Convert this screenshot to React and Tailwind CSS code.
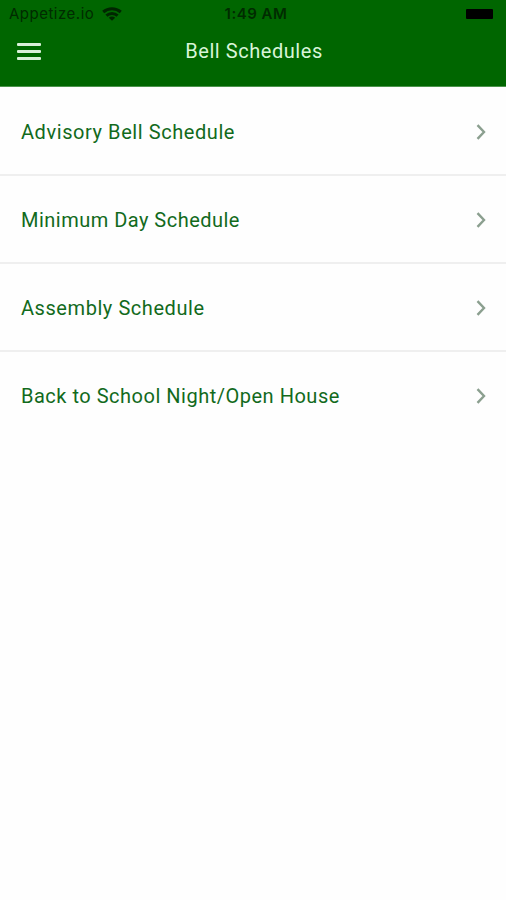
const SCHEDULES = [
  { id: 1, title: 'Advisory Bell Schedule', spacing: 'tracking-[0.57px]' },
  { id: 2, title: 'Minimum Day Schedule', spacing: 'tracking-[0.48px]' },
  { id: 3, title: 'Assembly Schedule', spacing: 'tracking-[0.56px]' },
  { id: 4, title: 'Back to School Night/Open House', spacing: 'tracking-[0.51px]' },
];

function WifiIcon() {
  return (
    <svg width="20" height="14" viewBox="0 0 20 14" fill="none" stroke="#002600" strokeWidth="3">
      <path d="M1.2 5C6.2 0.6 13.8 0.6 18.8 5" />
      <path d="M4.4 8.7C7.6 5.8 12.4 5.8 15.6 8.7" />
      <path d="M10 13.8L6.8 10.8C8.7 9.2 11.3 9.2 13.2 10.8Z" fill="#002600" stroke="none" />
    </svg>
  );
}

function StatusBar() {
  return (
    <div className="grid h-7 grid-cols-3 items-center text-[15px] leading-7 text-[#002b00]">
      <div className="flex items-center gap-2 pl-[9px]">
        <span className="tracking-[0.5px] whitespace-nowrap">Appetize.io</span>
        <WifiIcon />
      </div>
      <span className="pl-1.5 text-center font-semibold tracking-[0.5px] whitespace-nowrap">1:49 AM</span>
      <div className="mr-[13px] h-[10px] w-[27px] justify-self-end rounded-[1px] bg-black" />
    </div>
  );
}

function Header() {
  return (
    <header className="h-[87px] border-b border-[#4c944c] bg-[#006600] font-['Inter',sans-serif]">
      <StatusBar />
      <div className="grid h-[47px] grid-cols-[44px_1fr_44px] items-center">
        <button className="ml-[17px] flex w-6 flex-col gap-1" aria-label="Menu">
          <span className="h-[3px] w-6 rounded-[1px] bg-[#d9f0d9]" />
          <span className="h-[3px] w-6 rounded-[1px] bg-[#d9f0d9]" />
          <span className="h-[3px] w-6 rounded-[1px] bg-[#d9f0d9]" />
        </button>
        <h1 className="pb-0.5 pl-0.5 text-center font-['Roboto',sans-serif] text-[20px] tracking-[0.55px] text-[#d9f5d9]">
          Bell Schedules
        </h1>
      </div>
    </header>
  );
}

function ScheduleRow({ title, spacing }) {
  return (
    <li className="flex h-[88px] items-center justify-between border-b-2 border-[#efefef] pt-0.5 pr-5 pl-[21px] last:border-transparent">
      <span className={`font-['Roboto',sans-serif] text-[20px] whitespace-nowrap text-[#126a1c] ${spacing}`}>{title}</span>
      <svg width="10" height="16" viewBox="0 0 10 16" fill="none" stroke="#8b9f8f" strokeWidth="2.4">
        <path d="M1.5 1.2L8 8L1.5 14.8" />
      </svg>
    </li>
  );
}

export default function App() {
  return (
    <div className="h-[900px] w-[506px] overflow-hidden bg-[#fefefe]">
      <Header />
      <ul className="mt-px">
        {SCHEDULES.map((item) => (
          <ScheduleRow key={item.id} title={item.title} spacing={item.spacing} />
        ))}
      </ul>
    </div>
  );
}
